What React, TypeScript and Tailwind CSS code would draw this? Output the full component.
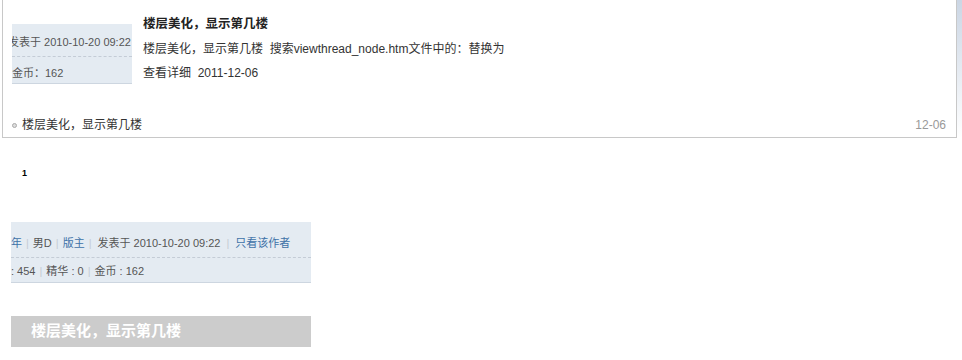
import React from "react";

const font = { fontFamily: '"Liberation Sans", "Noto Sans CJK SC", sans-serif' };

const Sep = () => <span className="mx-[4px] text-[#c5ccd4]">|</span>;

const App: React.FC = () => {
  return (
    <div className="w-[962px] h-[360px] bg-white text-[#333]" style={font}>
      <div className="flex items-start">
        {/* post card */}
        <div className="ml-[2px] w-[955px] border-x border-b border-[#c8c8c8] pl-[9px] pr-[10px] pt-[12px] pb-[2px]">
          <div className="flex items-start">
            <div className="mt-[12px] w-[120px] h-[60px] overflow-hidden bg-[#e4ebf2] border-b border-[#cdd6e0] text-[11px] text-[#555]">
              <div className="mt-[11px] h-[14px] leading-[14px] whitespace-nowrap -ml-[4px]">发表于 2010-10-20 09:22</div>
              <div className="mt-[7px] border-t border-dashed border-[#c4ccd6]" />
              <div className="mt-[9px] h-[14px] leading-[14px] whitespace-nowrap">金币：162</div>
            </div>
            <div className="ml-[11px] text-[12px]">
              <div className="h-[25px] leading-[25px] font-bold text-[#222] text-[12.5px]">楼层美化，显示第几楼</div>
              <div className="h-[24px] leading-[24px]">楼层美化，显示第几楼&nbsp;&nbsp;搜索viewthread_node.htm文件中的：替换为</div>
              <div className="h-[25px] leading-[25px]">查看详细&nbsp;&nbsp;2011-12-06</div>
            </div>
          </div>
          <div className="mt-[29px] h-[20px] flex items-center justify-between text-[12px]">
            <div className="flex items-center">
              <span className="w-[5px] h-[5px] rounded-full border border-[#aaa] bg-[#ddd] mr-[5px]" />
              <span>楼层美化，显示第几楼</span>
            </div>
            <span className="text-[#999]">12-06</span>
          </div>
        </div>
        <div className="w-[5px] h-[138px] bg-gradient-to-b from-[#cbd6e4] to-white" />
      </div>

      <div className="mt-[29px] ml-[22px] h-[12px] leading-[12px] text-[9px] font-bold text-black">1</div>

      {/* second screenshot */}
      <div className="mt-[43px] ml-[11px] w-[300px] h-[61px] overflow-hidden bg-[#e4ebf2] border-b border-[#cdd6e0] text-[11px] text-[#555]">
        <div className="mt-[14px] h-[14px] leading-[14px] whitespace-nowrap flex items-center">
          <span className="text-[#3e72a8]">年</span>
          <Sep />
          <span>男D</span>
          <Sep />
          <span className="text-[#3e72a8]">版主</span>
          <Sep />
          <span className="ml-[2px]">发表于 2010-10-20 09:22</span>
          <span className="mx-[6px] text-[#c5ccd4]">|</span>
          <span className="text-[#3e72a8]">只看该作者</span>
        </div>
        <div className="mt-[7px] border-t border-dashed border-[#c4ccd6]" />
        <div className="mt-[6px] h-[14px] leading-[14px] whitespace-nowrap flex items-center">
          <span>:&nbsp;454</span>
          <Sep />
          <span>精华 : 0</span>
          <Sep />
          <span>金币 : 162</span>
        </div>
      </div>

      {/* title bar */}
      <div className="mt-[33px] ml-[11px] w-[300px] h-[31px] bg-[#cccccc] flex items-center pl-[20px]">
        <span className="text-white font-bold text-[15px]">楼层美化，显示第几楼</span>
      </div>
    </div>
  );
};

export default App;
